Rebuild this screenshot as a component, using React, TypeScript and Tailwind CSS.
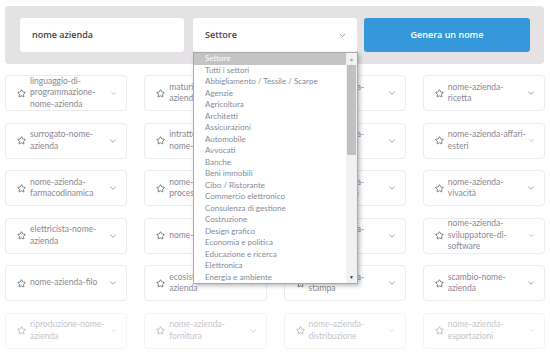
import { ChevronDown, Star } from "lucide-react";

type NameCard = {
  name: string;
  small?: boolean;
  faded?: boolean;
};

const cards: NameCard[] = [
  { name: "linguaggio-di-programmazione-nome-azienda", small: true },
  { name: "maturità-nome-azienda" },
  { name: "nome-azienda-musicale" },
  { name: "nome-azienda-ricetta" },
  { name: "surrogato-nome-azienda" },
  { name: "intrattenimento-nome-azienda" },
  { name: "nome-azienda-agenzia" },
  { name: "nome-azienda-affari-esteri", small: true },
  { name: "nome-azienda-farmacodinamica" },
  { name: "nome-azienda-processo" },
  { name: "nome-azienda-biotecnologia" },
  { name: "nome-azienda-vivacità" },
  { name: "elettricista-nome-azienda" },
  { name: "nome-azienda" },
  { name: "nome-azienda-artigianato" },
  { name: "nome-azienda-sviluppatore-di-software", small: true },
  { name: "nome-azienda-filo" },
  { name: "ecosistema-nome-azienda" },
  { name: "nome-azienda-stampa" },
  { name: "scambio-nome-azienda" },
  { name: "riproduzione-nome-azienda", faded: true, small: true },
  { name: "nome-azienda-fornitura", faded: true },
  { name: "nome-azienda-distribuzione", faded: true, small: true },
  { name: "nome-azienda-esportazioni", faded: true, small: true },
];

const sectors = [
  "Tutti i settori",
  "Abbigliamento / Tessile / Scarpe",
  "Agenzie",
  "Agricoltura",
  "Architetti",
  "Assicurazioni",
  "Automobile",
  "Avvocati",
  "Banche",
  "Beni immobili",
  "Cibo / Ristorante",
  "Commercio elettronico",
  "Consulenza di gestione",
  "Costruzione",
  "Design grafico",
  "Economia e politica",
  "Educazione e ricerca",
  "Elettronica",
  "Energia e ambiente",
];

function Card({ card }: { card: NameCard }) {
  return (
    <div
      className={`flex h-[36px] items-center rounded-[4px] border border-[#ebebeb] bg-white pl-[11px] pr-[8px] ${
        card.faded ? "opacity-50" : ""
      }`}
    >
      <Star size={9} strokeWidth={2} className="shrink-0 text-[#555]" />
      <span className="ml-[4px] w-[78px] shrink-0 break-words text-[8.5px] leading-[11.5px] text-[#8b8796]">
        {card.name}
      </span>
      <span className="ml-auto flex w-[10px] shrink-0 justify-center">
        <ChevronDown
          size={card.small ? 7 : 10}
          strokeWidth={1.6}
          className="text-[#777]"
        />
      </span>
    </div>
  );
}

export default function App() {
  return (
    <div className="relative h-[359px] w-[550px] overflow-hidden bg-white font-['Lato',sans-serif]">
      <div className="mx-[5px] mt-[6px] flex w-[539px] rounded-[4px] bg-[#e4e2e4] py-[12px] pl-[15px] pr-[14px] font-['Open_Sans',sans-serif]">
        <div className="flex h-[34px] w-[164px] items-center rounded-[3px] bg-white pl-[12px] text-[9px] font-semibold text-[#444]">
          nome azienda
        </div>
        <div className="relative ml-[9px] w-[164px]">
          <div className="flex h-[34px] items-center justify-between rounded-[3px] bg-white pl-[12px] pr-[10px] text-[9px] font-semibold text-[#444]">
            Settore
            <ChevronDown size={9} strokeWidth={1.8} className="text-[#666]" />
          </div>
          <div className="absolute left-0 top-full z-10 flex h-[232px] w-[165px] border border-[#a9a9a9] bg-white font-['Lato',sans-serif] shadow-[2px_2px_4px_rgba(0,0,0,0.25)]">
            <ul className="flex-1 text-[8px] leading-[11.5px] text-[#858b9a]">
              <li className="bg-[#c4c3c6] pl-[11px] text-white">Settore</li>
              {sectors.map((s) => (
                <li key={s} className="pl-[11px]">
                  {s}
                </li>
              ))}
            </ul>
            <div className="flex w-[11px] flex-col items-center bg-[#f1f1f1]">
              <span className="mt-[3px] text-[5px] leading-[6px] text-[#a3a3a3]">▲</span>
              <div className="mt-[3px] h-[90px] w-[9px] bg-[#c1c1c1]" />
              <span className="mb-[3px] mt-auto text-[5px] leading-[6px] text-[#333]">▼</span>
            </div>
          </div>
        </div>
        <button className="ml-[7px] h-[34px] w-[166px] rounded-[3px] bg-[#3498db] text-[9px] font-semibold text-white">
          Genera un nome
        </button>
      </div>

      <div className="mt-[11px] grid grid-cols-4 gap-x-[17px] gap-y-[11.5px] px-[5px]">
        {cards.map((c) => (
          <Card key={c.name} card={c} />
        ))}
      </div>
    </div>
  );
}
